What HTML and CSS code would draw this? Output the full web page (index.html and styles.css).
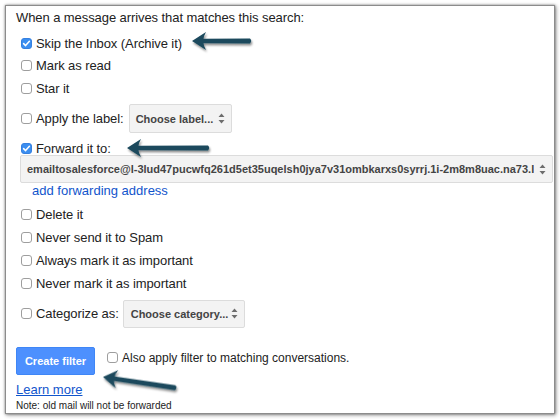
FILE: index.html
```html
<!DOCTYPE html>
<html>
<head>
<meta charset="utf-8">
<link rel="stylesheet" href="styles.css">
</head>
<body>
<div class="panel">
  <div class="heading">When a message arrives that matches this search:</div>
  <div class="opts">
    <div class="row r22"><span class="cb on"><svg viewBox="0 0 11 11"><path d="M2.6 5.6 L4.6 7.6 L8.4 3.3" fill="none" stroke="#fff" stroke-width="1.5" stroke-linecap="round" stroke-linejoin="round"/></svg></span>Skip the Inbox (Archive it)</div>
    <div class="row r23"><span class="cb"></span>Mark as read</div>
    <div class="row r23"><span class="cb"></span>Star it</div>
    <div class="row selrow mt4"><span class="cb"></span>Apply the label:<span class="sel sel-label">Choose label...<svg class="ud" viewBox="0 0 7 11"><path d="M3.5 0.5 L6.5 4 L0.5 4 Z M3.5 10.5 L6.5 7 L0.5 7 Z" fill="#6d6d6d"/></svg></span></div>
    <div class="row fwd"><span class="cb on"><svg viewBox="0 0 11 11"><path d="M2.6 5.6 L4.6 7.6 L8.4 3.3" fill="none" stroke="#fff" stroke-width="1.5" stroke-linecap="round" stroke-linejoin="round"/></svg></span>Forward it to:</div>
    <div class="sel sel-email"><span class="email">emailtosalesforce@l-3lud47pucwfq261d5et35uqelsh0jya7v31ombkarxs0syrrj.1i-2m8m8uac.na73.l</span><svg class="ud" viewBox="0 0 7 11"><path d="M3.5 0.5 L6.5 4 L0.5 4 Z M3.5 10.5 L6.5 7 L0.5 7 Z" fill="#6d6d6d"/></svg></div>
    <div class="addfwd">add forwarding address</div>
    <div class="row r23 mt4"><span class="cb"></span>Delete it</div>
    <div class="row r23"><span class="cb"></span>Never send it to Spam</div>
    <div class="row r23"><span class="cb"></span>Always mark it as important</div>
    <div class="row r23"><span class="cb"></span>Never mark it as important</div>
    <div class="row selrow mt4"><span class="cb"></span>Categorize as:<span class="sel sel-cat">Choose category...<svg class="ud" viewBox="0 0 7 11"><path d="M3.5 0.5 L6.5 4 L0.5 4 Z M3.5 10.5 L6.5 7 L0.5 7 Z" fill="#6d6d6d"/></svg></span></div>
  </div>
  <div class="actions">
    <div class="btn">Create filter</div>
    <div class="also"><span class="cb"></span>Also apply filter to matching conversations.</div>
  </div>
  <div class="learn">Learn more</div>
  <div class="note">Note: old mail will not be forwarded</div>
</div>
<svg class="arrows" width="560" height="419" viewBox="0 0 560 419">
  <defs>
    <filter id="sh" x="-20%" y="-50%" width="140%" height="200%">
      <feDropShadow dx="1" dy="2" stdDeviation="1.2" flood-color="#000" flood-opacity="0.45"/>
    </filter>
  </defs>
  <g fill="#1c4a5d" filter="url(#sh)">
    <path transform="translate(192,41)" d="M0 0 L14 -9 Q11.5 -4.5 11.5 -2.2 L58 -2.4 Q60.5 0 58 2.4 L11.5 2.2 Q11.5 4.5 14 9 Z"/>
    <path transform="translate(127,148)" d="M0 0 L14 -9 Q11.5 -4.5 11.5 -2.2 L81 -2.4 Q83.5 0 81 2.4 L11.5 2.2 Q11.5 4.5 14 9 Z"/>
    <path transform="translate(103,377) rotate(8.5)" d="M0 0 L14 -9 Q11.5 -4.5 11.5 -2.2 L73 -2.4 Q75.5 0 73 2.4 L11.5 2.2 Q11.5 4.5 14 9 Z"/>
  </g>
</svg>
</body>
</html>
```

FILE: styles.css
```css
html, body {
  margin: 0;
  padding: 0;
  background: #ffffff;
}
body {
  width: 560px;
  height: 419px;
  overflow: hidden;
  position: relative;
  font-family: "Liberation Sans", Arial, sans-serif;
  font-size: 13px;
  color: #222222;
}
.panel {
  box-sizing: border-box;
  margin: 5px 0 0 5px;
  width: 550px;
  height: 409px;
  border: 1px solid #8c8c8c;
  box-shadow: 0 0 2px rgba(0,0,0,0.35), 1px 1px 4px rgba(0,0,0,0.45);
  padding: 1px 0 0 10px;
  background: #fff;
}
.heading {
  height: 22px;
  line-height: 22px;
  letter-spacing: -0.08px;
}
.opts {
  margin-top: 3px;
}
.row {
  display: flex;
  align-items: center;
  padding-left: 5px;
  letter-spacing: -0.08px;
}
.r22 { height: 22px; }
.r23 { height: 23px; }
.mt4 { margin-top: 4px; }
.cb {
  box-sizing: border-box;
  width: 11px;
  height: 11px;
  border: 1px solid #9e9e9e;
  border-radius: 3px;
  background: #fff;
  margin-right: 4px;
  flex: none;
  display: flex;
}
.cb.on {
  background: #3b8ef0;
  border-color: #3580e0;
}
.cb svg {
  width: 11px;
  height: 11px;
  margin: -1px;
}
.selrow {
  height: 29px;
}
.sel {
  box-sizing: border-box;
  display: flex;
  align-items: center;
  background: #f3f3f3;
  border: 1px solid #dcdcdc;
  border-radius: 2px;
  font-size: 11px;
  font-weight: bold;
  color: #444;
  height: 29px;
  padding: 0 6px 0 6px;
  letter-spacing: 0;
}
.sel-label {
  margin-left: 5px;
  width: 103px;
  justify-content: space-between;
}
.sel-cat {
  margin-left: 4px;
  width: 122px;
  height: 28px;
  justify-content: space-between;
  padding-left: 7px;
}
.ud {
  width: 7px;
  height: 11px;
  flex: none;
}
.fwd {
  height: 14px;
  margin-top: 8px;
}
.sel-email {
  margin-left: 4px;
  width: 533px;
  height: 28px;
  padding-left: 6px;
  justify-content: space-between;
}
.email {
  white-space: nowrap;
  overflow: hidden;
}
.addfwd {
  color: #1155cc;
  height: 16px;
  line-height: 16px;
  padding-left: 16px;
}
.actions {
  display: flex;
  align-items: flex-start;
  margin-top: 19px;
}
.btn {
  box-sizing: border-box;
  width: 79px;
  height: 28px;
  line-height: 26px;
  text-align: center;
  background: #4d90fe;
  border: 1px solid #3f86f6;
  border-radius: 2px;
  color: #fff;
  font-size: 11px;
  font-weight: bold;
}
.also {
  display: flex;
  align-items: center;
  height: 21px;
  margin-left: 12px;
  font-size: 12px;
}
.learn {
  margin-top: 7px;
  height: 16px;
  line-height: 16px;
  color: #1155cc;
  text-decoration: underline;
  width: max-content;
}
.note {
  margin-top: 1px;
  font-size: 10px;
  line-height: 13px;
  color: #222;
}
.arrows {
  position: absolute;
  left: 0;
  top: 0;
  pointer-events: none;
}
```
